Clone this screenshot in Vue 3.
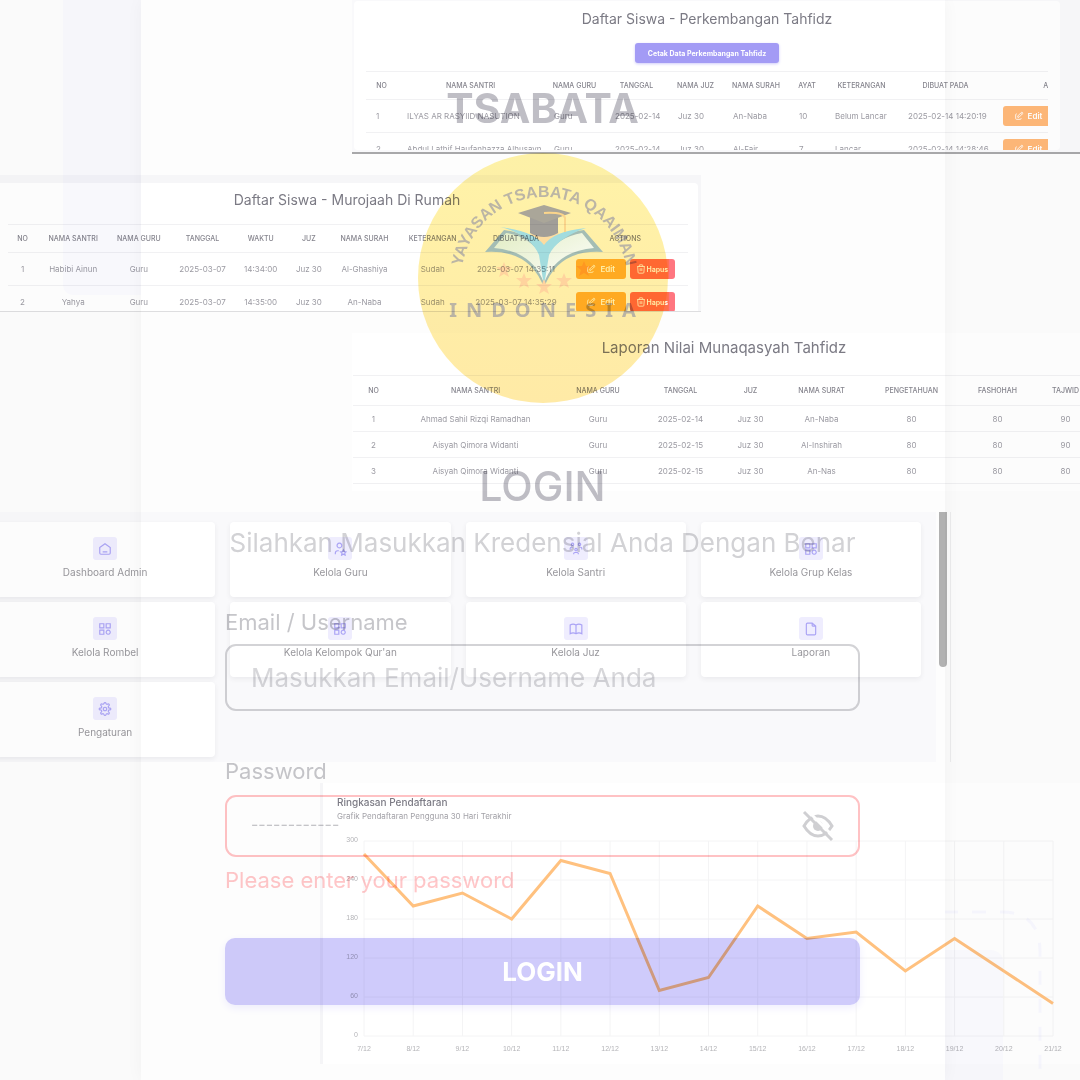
<script setup>
import { ref } from 'vue'

const email = ref('')
const password = ref('')

const progress = {
  widths: [31, 147, 61, 63, 55, 66, 36, 73, 95, 132],
  heads: ['No', 'Nama Santri', 'Nama Guru', 'Tanggal', 'Nama Juz', 'Nama Surah', 'Ayat', 'Keterangan', 'Dibuat Pada', 'Actions'],
  rows: [
    ['1', 'ILYAS AR RASYIID NASUTION', 'Guru', '2025-02-14', 'Juz 30', 'An-Naba', '10', 'Belum Lancar', '2025-02-14 14:20:19'],
    ['2', 'Abdul Lathif Haufanhazza Alhusayn', 'Guru', '2025-02-14', 'Juz 30', 'Al-Fajr', '7', 'Lancar', '2025-02-14 14:28:46'],
  ],
}

const review = {
  widths: [29, 72, 59, 68, 48, 48, 63, 73, 93, 125],
  heads: ['No', 'Nama Santri', 'Nama Guru', 'Tanggal', 'Waktu', 'Juz', 'Nama Surah', 'Keterangan', 'Dibuat Pada', 'Actions'],
  rows: [
    ['1', 'Habibi Ainun', 'Guru', '2025-03-07', '14:34:00', 'Juz 30', 'Al-Ghashiya', 'Sudah', '2025-03-07 14:35:11'],
    ['2', 'Yahya', 'Guru', '2025-03-07', '14:35:00', 'Juz 30', 'An-Naba', 'Sudah', '2025-03-07 14:35:29'],
  ],
}

const report = {
  widths: [41, 163, 82, 83, 57, 85, 95, 77, 59],
  heads: ['No', 'Nama Santri', 'Nama Guru', 'Tanggal', 'Juz', 'Nama Surat', 'Pengetahuan', 'Fashohah', 'Tajwid'],
  rows: [
    ['1', 'Ahmad Sahil Rizqi Ramadhan', 'Guru', '2025-02-14', 'Juz 30', 'An-Naba', '80', '80', '90'],
    ['2', 'Aisyah Qimora Widanti', 'Guru', '2025-02-15', 'Juz 30', 'Al-Inshirah', '80', '80', '90'],
    ['3', 'Aisyah Qimora Widanti', 'Guru', '2025-02-15', 'Juz 30', 'An-Nas', '80', '80', '80'],
  ],
}

const grid = 'M3 3h7v7H3zM14 3h7v7h-7zM3 14h7v7H3zM17.500 14a3.500 3.500 0 1 0 .01 0z'
const menu = [
  { label: 'Dashboard Admin', icon: 'M3 9.500L12 3l9 6.500V19a2 2 0 0 1-2 2H5a2 2 0 0 1-2-2zM8 17h8' },
  { label: 'Kelola Guru', icon: 'M11 2a4 4 0 1 0 .01 0zM4 21v-2a4 4 0 0 1 4-4h2M17.800 20.800l-3 1.600.6-3.200-2.300-2.300 3.200-.4 1.500-3 1.500 3 3.200.4-2.300 2.300.6 3.200z' },
  { label: 'Kelola Santri', icon: 'M12 11a2 2 0 1 0 .01 0zM8 21v-1a2 2 0 0 1 2-2h4a2 2 0 0 1 2 2v1M18 2a2 2 0 1 0 .01 0zM18 9h2a2 2 0 0 1 2 2v2M6 2a2 2 0 1 0 .01 0zM2 13v-2a2 2 0 0 1 2-2h2' },
  { label: 'Kelola Grup Kelas', icon: grid },
  { label: 'Kelola Rombel', icon: grid },
  { label: "Kelola Kelompok Qur'an", icon: grid },
  { label: 'Kelola Juz', icon: 'M12 5v15M2 20a10 10 0 0 1 10 0 10 10 0 0 1 10 0V5a10 10 0 0 0-10 0A10 10 0 0 0 2 5z' },
  { label: 'Laporan', icon: 'M14 2v4a1 1 0 0 0 1 1h5M18 22H6a2 2 0 0 1-2-2V4a2 2 0 0 1 2-2h8l6 5v13a2 2 0 0 1-2 2z' },
  { label: 'Pengaturan', icon: 'M10.300 2.300c.4-1.700 3-1.700 3.400 0a2 2 0 0 0 3.100 1.300c1.500-1 3.300.8 2.300 2.300a2.200 2.200 0 0 0 1.600 4.400c1.700.4 1.700 3 0 3.400a2.200 2.200 0 0 0-1.600 4.400c1 1.500-.8 3.300-2.300 2.300a2 2 0 0 0-3.100 1.300c-.4 1.700-3 1.700-3.400 0a2 2 0 0 0-3.100-1.300c-1.500 1-3.300-.8-2.300-2.300a2.200 2.200 0 0 0-1.600-4.400c-1.700-.4-1.700-3 0-3.400a2.200 2.200 0 0 0 1.600-4.400c-1-1.500.8-3.300 2.300-2.300 1 .6 2.800.1 3.100-1.300zM12 9a3 3 0 1 0 .01 0z' },
]

const signups = [280, 200, 220, 180, 270, 250, 70, 90, 200, 150, 160, 100, 150, 100, 50]
const levels = [300, 240, 180, 120, 60, 0]
const xOf = (i) => 27 + (i * 689) / 14
const yOf = (v) => 209 - (v * 195) / 300
const line = signups.map((v, i) => `${xOf(i)},${yOf(v)}`).join(' ')

const stars = [[86, 117], [106, 128], [126, 134], [146, 128], [166, 116]]
const pencil = 'M7 7H6a2 2 0 0 0-2 2v9a2 2 0 0 0 2 2h9a2 2 0 0 0 2-2v-1M20.400 6.600a2.100 2.100 0 0 0-3-3L9 12v3h3zM16 5l3 3'
const trash = 'M3 6h18M10 10v7M14 10v7M4 6l1 14a2 2 0 0 0 2 2h10a2 2 0 0 0 2-2l1-14M8 6V3a1 1 0 0 1 1-1h6a1 1 0 0 1 1 1v3'
</script>

<template>
  <div class="page">
    <main class="board">
      <section class="panel progress">
        <div class="sheet">
          <h2>Daftar Siswa - Perkembangan Tahfidz</h2>
          <button type="button" class="print">Cetak Data Perkembangan Tahfidz</button>
          <div class="clip">
            <table class="left">
              <colgroup><col v-for="(w, i) in progress.widths" :key="i" :style="{ width: w + 'px' }" /></colgroup>
              <thead><tr><th v-for="h in progress.heads" :key="h">{{ h }}</th></tr></thead>
              <tbody>
                <tr v-for="r in progress.rows" :key="r[0]">
                  <td v-for="(c, i) in r" :key="i">{{ c }}</td>
                  <td>
                    <button type="button" class="act edit soft">
                      <svg viewBox="0 0 24 24"><path :d="pencil" /></svg>Edit
                    </button>
                  </td>
                </tr>
              </tbody>
            </table>
          </div>
        </div>
      </section>

      <section class="panel review">
        <div class="sheet">
          <h2>Daftar Siswa - Murojaah Di Rumah</h2>
          <table>
            <colgroup><col v-for="(w, i) in review.widths" :key="i" :style="{ width: w + 'px' }" /></colgroup>
            <thead><tr><th v-for="h in review.heads" :key="h">{{ h }}</th></tr></thead>
            <tbody>
              <tr v-for="r in review.rows" :key="r[0]">
                <td v-for="(c, i) in r" :key="i">{{ c }}</td>
                <td>
                  <div class="acts">
                    <button type="button" class="act edit"><svg viewBox="0 0 24 24"><path :d="pencil" /></svg>Edit</button>
                    <button type="button" class="act drop"><svg viewBox="0 0 24 24"><path :d="trash" /></svg>Hapus</button>
                  </div>
                </td>
              </tr>
            </tbody>
          </table>
        </div>
      </section>

      <section class="panel report">
        <h2>Laporan Nilai Munaqasyah Tahfidz</h2>
        <table>
          <colgroup><col v-for="(w, i) in report.widths" :key="i" :style="{ width: w + 'px' }" /></colgroup>
          <thead><tr><th v-for="h in report.heads" :key="h">{{ h }}</th></tr></thead>
          <tbody>
            <tr v-for="r in report.rows" :key="r[0]"><td v-for="(c, i) in r" :key="i">{{ c }}</td></tr>
          </tbody>
        </table>
      </section>

      <section class="panel menu">
        <nav class="tiles">
          <a v-for="m in menu" :key="m.label" href="#" class="tile">
            <span class="badge"><svg viewBox="0 0 24 24"><path :d="m.icon" /></svg></span>
            {{ m.label }}
          </a>
        </nav>
        <div class="rail"><div class="thumb"></div></div>
      </section>

      <section class="panel summary">
        <h3>Ringkasan Pendaftaran</h3>
        <p>Grafik Pendaftaran Pengguna 30 Hari Terakhir</p>
        <svg class="chart" viewBox="0 0 743 237">
          <g class="rules">
            <line v-for="l in levels" :key="l" x1="27" x2="716" :y1="yOf(l)" :y2="yOf(l)" />
            <line v-for="(v, i) in signups" :key="i" :x1="xOf(i)" :x2="xOf(i)" y1="14" y2="209" />
          </g>
          <polyline :points="line" />
          <text v-for="l in levels" :key="l" x="21" :y="yOf(l) + 1" text-anchor="end">{{ l }}</text>
          <text v-for="(v, i) in signups" :key="i" :x="xOf(i)" y="224" text-anchor="middle">{{ i + 7 }}/12</text>
        </svg>
      </section>
    </main>

    <div class="login">
      <div class="band top"></div>
      <div class="band bottom"></div>
      <svg class="dashes" viewBox="0 0 150 170"><path d="M14 2h86q38 0 38 40v140" /></svg>
      <form class="form" @submit.prevent>
        <h1>TSABATA</h1>
        <svg class="logo" viewBox="0 0 250 250" role="img" aria-label="Yayasan Tsabata Qaaiman Indonesia">
          <defs>
            <linearGradient id="disc" x1="0" y1="0" x2="0" y2="1">
              <stop offset="0" stop-color="#fff3a8" />
              <stop offset="1" stop-color="#ffeaa6" />
            </linearGradient>
            <linearGradient id="leaf" x1="0" y1="0" x2="1" y2="1">
              <stop offset="0" stop-color="#e2edc4" />
              <stop offset="1" stop-color="#ffffff" />
            </linearGradient>
            <path id="arc" d="M43 135V127a83 83 0 0 1 166 0V135" />
          </defs>
          <circle cx="125" cy="125" r="125" fill="url(#disc)" />
          <path d="M113 77h27l2 12q-7 14-16 16q-10-4-14-15z" fill="#fcdca0" />
          <path d="M67 99l19-22q26 3 40 24q14-21 40-24l19 22q-45-3-59 36q-14-39-59-36z" fill="#a4bdb4" />
          <path d="M76 95l12-15q25 4 36 24l2 26q-12-32-50-35zM176 95l-12-15q-25 4-36 24l-2 26q12-32 50-35z" fill="url(#leaf)" />
          <path d="M82 74q34 4 44 18q10-14 42-17q-29 10-37 27l-5 31l-5-31q-9-21-39-28z" fill="#a2dcde" />
          <path d="M112 63q14-7 28 0v17q-14 8-28 0z" fill="#a19e98" />
          <path d="M100 60l26-8l27 8l-27 10z" fill="#aaa699" />
          <path d="M126 60q20-1 21 5v14" fill="none" stroke="#fbd58b" stroke-width="2" />
          <polygon v-for="(s, i) in stars" :key="i" :transform="`translate(${s[0]} ${s[1]})`" points="0,-8 2,-3 8,-3 3,1 5,7 0,4 -5,7 -3,1 -8,-3 -2,-3" fill="#ffd39e" />
          <text class="ring"><textPath href="#arc" startOffset="50%" text-anchor="middle">YAYASAN TSABATA QAAIMAN</textPath></text>
          <text class="land" x="129" y="164" text-anchor="middle">INDONESIA</text>
        </svg>
        <h2 class="heading">LOGIN</h2>
        <p class="hint">Silahkan Masukkan Kredensial Anda Dengan Benar</p>
        <label for="email">Email / Username</label>
        <input id="email" v-model="email" class="field" type="text" placeholder="Masukkan Email/Username Anda" />
        <label for="password" class="second">Password</label>
        <div class="field invalid">
          <input id="password" v-model="password" type="password" placeholder="------------" />
          <button type="button" class="eye" aria-label="Tampilkan password">
            <svg viewBox="0 0 32 32">
              <path d="M2 16Q8 6 16 6t14 10Q24 26 16 26T2 16z" />
              <circle cx="16" cy="16" r="5" />
              <path class="gap" d="M5 0l28 28" />
              <path d="M2 2l28 28" />
            </svg>
          </button>
        </div>
        <p class="error">Please enter your password</p>
        <button type="submit" class="submit">LOGIN</button>
      </form>
    </div>
  </div>
</template>

<style>
body {
  margin: 0;
  background: #fdfdfd;
}
</style>

<style scoped>
.page {
  display: grid;
  grid-template-columns: minmax(0, 1fr);
  min-height: 100vh;
  overflow: hidden;
  background: #fdfdfd;
  font-family: Inter, "Liberation Sans", sans-serif;
  isolation: isolate;
}
.page * {
  box-sizing: border-box;
}
.board,
.login {
  grid-area: 1 / 1;
}
button {
  font-family: inherit;
  border: 0;
  padding: 0;
}
h1, h2, h3, p {
  margin: 0;
}
.board {
  display: flex;
  flex-direction: column;
  gap: 21px;
  padding-bottom: 15px;
}
.panel {
  overflow: hidden;
}
.panel h2 {
  font-size: 14px;
  line-height: 18px;
  font-weight: 400;
  color: #7b7a84;
  text-align: center;
}
table {
  table-layout: fixed;
  border-collapse: collapse;
  width: max-content;
}
th,
td {
  padding: 0;
  text-align: center;
  white-space: nowrap;
  border-top: 1px solid #f1f1f3;
  line-height: 10px;
}
th {
  font-size: 7px;
  font-weight: 500;
  color: #85848d;
  text-transform: uppercase;
}
td {
  font-size: 8px;
  color: #9b9aa2;
}

.progress {
  height: 154px;
  margin-left: 352px;
  padding: 1px 20px 0 2px;
  background: #f9f9fb;
  border-bottom: 2px solid #a8a8aa;
}
.progress .sheet {
  height: 149px;
  padding: 9px 12px 0;
  overflow: hidden;
  text-align: center;
  background: #fff;
  border-radius: 4px;
}
.print {
  height: 20px;
  width: 144px;
  margin: 15px 0 8px;
  display: inline-block;
  vertical-align: top;
  border-radius: 3px;
  background: #a39bf5;
  box-shadow: 0 1px 3px #cfcbfa;
  color: #fff;
  font-size: 7px;
  font-weight: 700;
}
.clip {
  overflow: hidden;
}
.progress table {
  width: 759px;
}
.progress tr {
  height: 33px;
}
.progress thead tr {
  height: 28px;
}
.left td {
  text-align: left;
  padding-left: 10px;
}
.act {
  display: inline-flex;
  align-items: center;
  justify-content: center;
  height: 20px;
  border-radius: 3px;
  color: #fff;
  font-weight: 600;
  vertical-align: middle;
}
.act svg {
  width: 10px;
  height: 10px;
  fill: none;
  stroke: currentColor;
  stroke-width: 2;
}
.edit {
  width: 50px;
  gap: 4px;
  font-size: 8px;
  background: #ffb634;
}
.soft {
  background: #ffb878;
}
.drop {
  width: 45px;
  font-size: 7px;
  gap: 0;
  background: linear-gradient(90deg, #ff6f4c 85%, #ff7680 88%);
}
.acts {
  display: flex;
  justify-content: center;
  gap: 4px;
}

.review {
  height: 137px;
  width: 701px;
  padding: 8px 3px 0 0;
  background: #f6f6f8;
  border-bottom: 1px solid #dedee0;
}
.review .sheet {
  height: 128px;
  padding: 8px 12px 0 8px;
  overflow: hidden;
  background: #fff;
  border-radius: 0 4px 0 0;
}
.review h2 {
  margin-bottom: 15px;
}
.review table {
  width: 680px;
}
.review tr {
  height: 33px;
}
.review thead tr {
  height: 28px;
}

.report {
  height: 158px;
  margin-left: 352px;
  padding: 6px 0 0 1px;
  background: #fff;
}
.report h2 {
  margin: 0 -15px 18px 0;
  font-size: 15px;
}
.report table {
  width: 742px;
}
.report tr {
  height: 26px;
}
.report thead tr {
  height: 30px;
}
.report tbody tr:last-child {
  border-bottom: 1px solid #f0f0f2;
}

.menu {
  display: flex;
  margin-right: 129px;
  border-right: 1px solid #ededee;
}
.tiles {
  flex: 1;
  display: grid;
  grid-template-columns: repeat(4, 1fr);
  gap: 5px 15px;
  margin-left: -5px;
  padding: 10px 15px 5px 0;
  background: #f9f9fb;
}
.tile {
  display: flex;
  flex-direction: column;
  align-items: center;
  gap: 5px;
  height: 75px;
  padding-top: 15px;
  border-radius: 4px;
  background: #fff;
  box-shadow: 0 2px 5px rgba(60, 60, 80, 0.08);
  color: #98979c;
  font-size: 10px;
  line-height: 15px;
  text-decoration: none;
}
.badge {
  display: flex;
  align-items: center;
  justify-content: center;
  width: 24px;
  height: 23px;
  border-radius: 3px;
  background: #efedfe;
}
.badge svg {
  width: 14px;
  height: 14px;
  fill: none;
  stroke: #aaa3f5;
  stroke-width: 2;
}
.rail {
  width: 14px;
  padding: 0 3px;
}
.thumb {
  height: 155px;
  border-radius: 0 0 4px 4px;
  background: #b1b1b1;
}

.summary {
  margin-left: 320px;
  padding: 12px 0 0 14px;
  border-left: 3px solid #f5f5f7;
  background: #fff;
}
.summary h3 {
  font-size: 10px;
  line-height: 14px;
  font-weight: 500;
  color: #7b7a84;
}
.summary p {
  font-size: 8px;
  line-height: 14px;
  color: #a3a2a8;
}
.chart {
  display: block;
  width: 100%;
  margin-top: 4px;
}
.rules line {
  stroke: #f4f4f5;
}
.chart polyline {
  fill: none;
  stroke: #ffc17f;
  stroke-width: 3;
}
.chart text {
  font: 7px "Liberation Sans", sans-serif;
  fill: #b4b4b8;
}

.login {
  position: relative;
  display: grid;
  grid-template-columns: 141fr 804fr 135fr;
  mix-blend-mode: multiply;
  background: #fcfcfc;
}
.band {
  position: absolute;
  background: #f8f8fc;
}
.band.top {
  top: 0;
  left: 63px;
  width: 100px;
  height: 295px;
  border-bottom-left-radius: 10px;
}
.band.bottom {
  right: 77px;
  bottom: 0;
  width: 100px;
  height: 130px;
  border-top-right-radius: 12px;
}
.dashes {
  position: absolute;
  right: 28px;
  bottom: 0;
  width: 150px;
  height: 170px;
  fill: none;
  stroke: #f5f5fc;
  stroke-width: 3;
  stroke-dasharray: 14 14;
}
.form {
  grid-column: 2;
  position: relative;
  display: flex;
  flex-direction: column;
  align-items: stretch;
  padding: 83px 85px 73px 84px;
  background: #fff;
  box-shadow: 0 0 16px rgba(0, 0, 0, 0.04);
  font-size: 22px;
  line-height: 28px;
}
h1,
.heading {
  text-align: center;
  font-size: 41px;
  line-height: 50px;
  color: #bfbec5;
}
.logo {
  width: 250px;
  margin: 20px auto 58px;
}
.ring {
  font: bold 16px "Liberation Sans", sans-serif;
  fill: #bbb5a5;
}
.land {
  font: bold 20px "Noto Sans", sans-serif;
  letter-spacing: 9px;
  fill: #bbb5a5;
}
.heading {
  font-weight: 500;
}
.hint {
  margin: 16px 0 49px;
  text-align: center;
  white-space: nowrap;
  font-size: 26px;
  line-height: 32px;
  color: #d2d2d5;
}
label {
  color: #c6c6ca;
}
.second {
  margin-top: 46px;
}
.field {
  width: 100%;
  height: 67px;
  margin-top: 8px;
  padding: 0 24px;
  border: 2px solid #d3d3d6;
  border-radius: 11px;
  background: transparent;
}
input {
  font-family: inherit;
  font-size: 26px;
  color: #bfbec5;
  outline: 0;
}
input::placeholder {
  color: #d7d7da;
  opacity: 1;
}
.invalid {
  display: flex;
  align-items: center;
  justify-content: space-between;
  height: 62px;
  margin-top: 10px;
  border-color: #ffc2c4;
}
.invalid input {
  width: 300px;
  padding: 0 0 4px;
  border: 0;
  background: transparent;
  font-size: 16px;
}
.invalid input::placeholder {
  color: #c6c6ca;
}
.eye {
  display: flex;
  background: transparent;
}
.eye svg {
  width: 32px;
  height: 32px;
  fill: none;
  stroke: #cfcfd2;
  stroke-width: 3;
}
.eye circle {
  fill: #cfcfd2;
  stroke: none;
}
.eye .gap {
  stroke: #fff;
}
.error {
  margin: 9px 0 44px;
  color: #ffc6c8;
}
.submit {
  height: 67px;
  border-radius: 10px;
  background: #cfcbfb;
  box-shadow: 0 3px 8px #efeefe;
  color: #fff;
  font-size: 26px;
  font-weight: 700;
}
</style>
